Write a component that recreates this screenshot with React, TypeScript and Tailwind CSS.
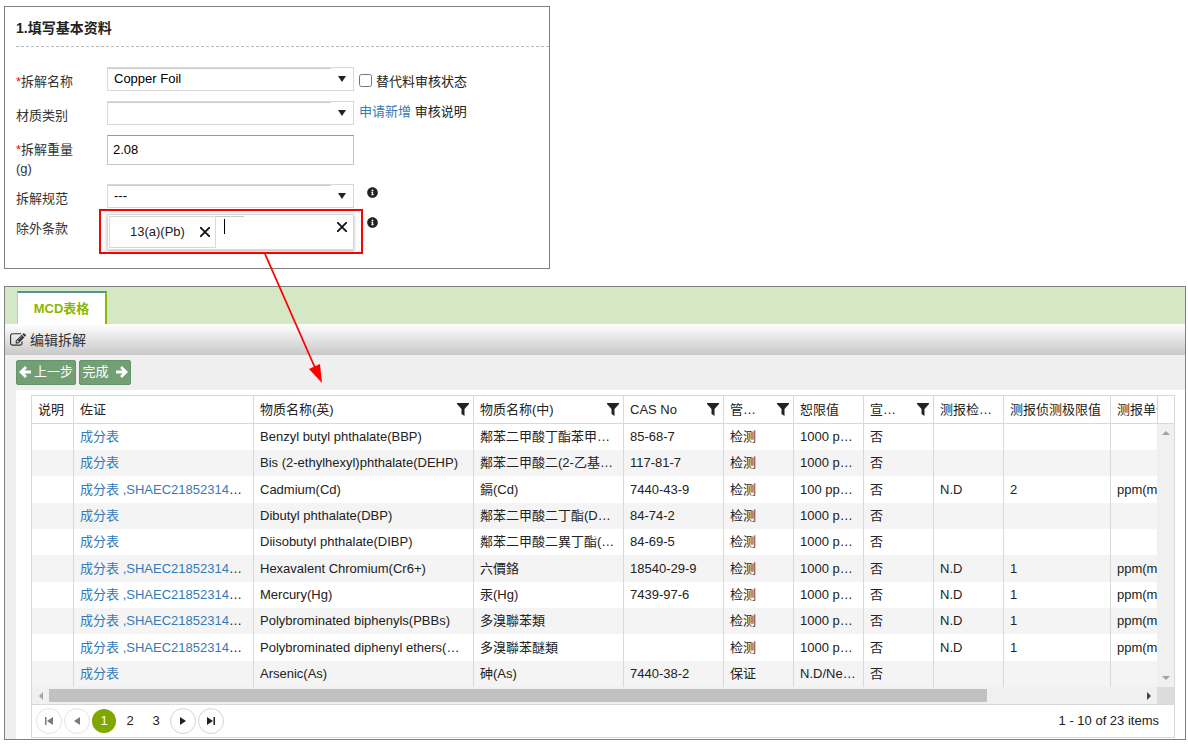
import { useState } from 'react'
import type { ReactNode } from 'react'
import { FaInfoCircle } from 'react-icons/fa'

interface Column {
  title: string
  width: string
  filter?: boolean
}

const columns: Column[] = [
  { title: '说明', width: 'w-[41px]' },
  { title: '佐证', width: 'w-[180px]' },
  { title: '物质名称(英)', width: 'w-[220px]', filter: true },
  { title: '物质名称(中)', width: 'w-[150px]', filter: true },
  { title: 'CAS No', width: 'w-[100px]', filter: true },
  { title: '管制类型', width: 'w-[70px]', filter: true },
  { title: '恕限值', width: 'w-[70px]' },
  { title: '宣告排除', width: 'w-[70px]', filter: true },
  { title: '测报检测值', width: 'w-[70px]' },
  { title: '测报侦测极限值', width: 'w-[107px]' },
  { title: '测报单位', width: 'w-[100px]' },
]

const REPORT = 'SHAEC2185231401'

// evidence report, english, chinese, CAS, control, threshold, declared, result, limit, unit
const rows = [
  ['', 'Benzyl butyl phthalate(BBP)', '鄰苯二甲酸丁酯苯甲酯(BBP)', '85-68-7', '检测', '1000 ppm', '否', '', '', ''],
  ['', 'Bis (2-ethylhexyl)phthalate(DEHP)', '鄰苯二甲酸二(2-乙基己基)酯', '117-81-7', '检测', '1000 ppm', '否', '', '', ''],
  [REPORT, 'Cadmium(Cd)', '鎘(Cd)', '7440-43-9', '检测', '100 ppm(mg/kg)', '否', 'N.D', '2', 'ppm(mg/kg)'],
  ['', 'Dibutyl phthalate(DBP)', '鄰苯二甲酸二丁酯(DBP)', '84-74-2', '检测', '1000 ppm', '否', '', '', ''],
  ['', 'Diisobutyl phthalate(DIBP)', '鄰苯二甲酸二異丁酯(DIBP)', '84-69-5', '检测', '1000 ppm', '否', '', '', ''],
  [REPORT, 'Hexavalent Chromium(Cr6+)', '六價鉻', '18540-29-9', '检测', '1000 ppm', '否', 'N.D', '1', 'ppm(mg/kg)'],
  [REPORT, 'Mercury(Hg)', '汞(Hg)', '7439-97-6', '检测', '1000 ppm', '否', 'N.D', '1', 'ppm(mg/kg)'],
  [REPORT, 'Polybrominated biphenyls(PBBs)', '多溴聯苯類', '', '检测', '1000 ppm', '否', 'N.D', '1', 'ppm(mg/kg)'],
  [REPORT, 'Polybrominated diphenyl ethers(PBDEs)', '多溴聯苯醚類', '', '检测', '1000 ppm', '否', 'N.D', '1', 'ppm(mg/kg)'],
  ['', 'Arsenic(As)', '砷(As)', '7440-38-2', '保证', 'N.D/Negative', '否', '', '', ''],
]

const FilterIcon = () => (
  <svg viewBox="0 0 12 13" className="w-3 h-[13px]" fill="#222">
    <path d="M0 0h12v1L7.500 6v7L4.500 11V6L0 1z" />
  </svg>
)

const EditIcon = () => (
  <svg viewBox="0 0 1792 1792" className="w-4 h-4" fill="currentColor">
    <path d="M888 1184l116-116-152-152-116 116v56h96v96h56zm440-720q-16-16-33 1l-350 350q-17 17-1 33t33-1l350-350q17-17 1-33zm80 594v190q0 119-84.500 203.500t-203.500 84.500h-832q-119 0-203.500-84.500t-84.500-203.500v-832q0-119 84.500-203.500t203.500-84.500h832q63 0 117 25 15 7 18 23 3 17-9 29l-49 49q-14 14-32 8-23-6-45-6h-832q-66 0-113 47t-47 113v832q0 66 47 113t113 47h832q66 0 113-47t47-113v-126q0-13 9-22l64-64q15-15 35-7t20 29zm-96-738l288 288-672 672h-288v-288zm444 132l-92 92-288-288 92-92q28-28 68-28t68 28l152 152q28 28 28 68t-28 68z" />
  </svg>
)

const StepArrow = ({ path }: { path: string }) => (
  <svg viewBox="0 0 12 12" className="w-3 h-3" fill="none" stroke="#fff" strokeWidth="2.8">
    <path d={path} />
  </svg>
)

const Cross = () => (
  <svg viewBox="0 0 10 10" className="w-2.5 h-2.5" stroke="#111" strokeWidth="1.8" fill="none">
    <path d="M0 0l10 10M10 0l-10 10" />
  </svg>
)

const Field = ({ id, label, required, children }: { id: string; label: ReactNode; required?: boolean; children: ReactNode }) => (
  <div className="flex items-start">
    <label htmlFor={id} className="w-[91px] shrink-0 pt-[5px] pr-6 leading-[19px] text-[#333]">
      {required && <span className="text-[#f00]">*</span>}
      {label}
    </label>
    {children}
  </div>
)

const DropDown = ({ id, options }: { id: string; options: string[] }) => (
  <div className="flex w-[247px] h-6 border border-[#d9d9d9] bg-white">
    <select id={id} className="flex-1 min-w-0 appearance-none border-t border-[#ccc] pl-1.5 pb-1 bg-white text-black outline-none">
      {options.map((o) => (
        <option key={o}>{o}</option>
      ))}
    </select>
    <span className="flex w-[22px] items-center justify-center">
      <svg viewBox="0 0 8 6" className="w-2 h-1.5" fill="#222">
        <path d="M0 0h8L4 6z" />
      </svg>
    </span>
  </div>
)

const BasicForm = () => {
  const [weight, setWeight] = useState('2.08')
  const [text, setText] = useState('')

  return (
    <section className="w-[546px] max-w-full border border-[#808080] pl-[11px] pb-[18px]">
      <h2 className="h-10 pt-3 border-b border-dashed border-[#bbb] text-sm leading-[19px] font-bold text-[#222]">
        1.填写基本资料
      </h2>
      <form className="pt-5">
        <div className="flex h-[68px]">
          <div className="flex flex-col gap-2.5">
            <Field id="name" label="拆解名称" required>
              <DropDown id="name" options={['Copper Foil']} />
            </Field>
            <Field id="material" label="材质类别">
              <DropDown id="material" options={['']} />
            </Field>
          </div>
          <div className="flex flex-col pt-1.5 pl-[5px]">
            <label className="flex items-center gap-1 h-[18px] text-[#222]">
              <input type="checkbox" className="w-[13px] h-[13px] -mt-1" />
              替代料审核状态
            </label>
            <div className="mt-3 leading-[18px] text-[#222]">
              <a href="#apply" className="text-[#337ab7]">申请新增</a> 审核说明
            </div>
          </div>
        </div>
        <div className="h-[49px]">
          <Field id="weight" label={<>拆解重量<br />(g)</>} required>
            <input
              id="weight"
              type="text"
              value={weight}
              onChange={(e) => setWeight(e.target.value)}
              className="w-[247px] h-[30px] border border-[#c4c4c4] border-t-[#999] px-[5px] pb-0.5 text-black outline-none"
            />
          </Field>
        </div>
        <div className="h-[30px]">
          <Field id="spec" label="拆解规范">
            <DropDown id="spec" options={['---']} />
            <FaInfoCircle className="ml-[13px] mt-[3px] w-[11px] h-[11px] text-[#222]" />
          </Field>
        </div>
        <Field id="exempt" label="除外条款">
          <div className="relative flex w-[247px] h-9 p-px border border-[#d9d9d9] bg-white shadow-[0_1px_3px_rgba(0,0,0,0.3)]">
            <div className="flex w-[107px] items-center border border-[#d9d9d9] pl-5 gap-[15px] text-[#222]">
              13(a)(Pb)
              <button type="button" aria-label="移除">
                <Cross />
              </button>
            </div>
            <input
              id="exempt"
              type="text"
              value={text}
              onChange={(e) => setText(e.target.value)}
              className="w-7 h-6 border-t border-[#ccc] outline-none"
            />
            <button type="button" aria-label="清除" className="ml-auto mr-[5px] self-start mt-1.5">
              <Cross />
            </button>
            <span className="absolute left-[116px] top-1 w-px h-[15px] bg-black" />
            {/* highlight frame */}
            <span className="absolute -left-[9px] -right-[10px] -top-1.5 -bottom-[5px] border-2 border-[#f00]" />
          </div>
          <FaInfoCircle className="ml-[13px] mt-[3px] w-[11px] h-[11px] text-[#222]" />
        </Field>
      </form>
    </section>
  )
}

const Grid = () => (
  <div className="border border-[#d9d9d9] bg-white">
    <div className="flex">
      <div className="flex-1 min-w-0 overflow-hidden">
        <table className="table-fixed w-[1178px] border-separate border-spacing-0 text-left text-[#222]">
          <thead>
            <tr className="h-7">
              {columns.map((c, i) => (
                <th key={c.title} className={`${c.width} p-0 border-b border-[#d9d9d9] font-normal ${i > 0 ? 'border-l' : ''}`}>
                  <div className="flex items-center pl-1.5 pr-1">
                    <span className={`flex-1 truncate leading-5 ${c.filter ? 'pr-[17px]' : ''}`}>{c.title}</span>
                    {c.filter && (
                      <button type="button" aria-label="筛选">
                        <FilterIcon />
                      </button>
                    )}
                  </div>
                </th>
              ))}
            </tr>
          </thead>
          <tbody>
            {rows.map(([report, ...cells], i) => (
              <tr key={cells[0]} className={`${i % 3 === 2 ? 'h-[27px]' : 'h-[26px]'} ${i % 2 ? 'bg-[#f4f4f4]' : 'bg-white'}`}>
                <td className="p-0" />
                <td className="py-0 pl-1.5 pr-2.5 border-l border-[#d9d9d9] truncate leading-5">
                  <a href="#evidence" className="text-[#337ab7]">成分表</a>
                  {report && <a href="#report" className="text-[#337ab7]"> ,{report}</a>}
                </td>
                {cells.map((cell, j) => (
                  <td key={j} className="py-0 pl-1.5 pr-[7px] border-l border-[#d9d9d9] truncate leading-5">
                    {cell}
                  </td>
                ))}
              </tr>
            ))}
          </tbody>
        </table>
      </div>
      <div className="flex flex-col w-[17px] shrink-0">
        <div className="h-7 border-b border-l border-[#d9d9d9]" />
        <div className="flex flex-1 flex-col items-center justify-between bg-[#f0f0f0] pt-[7px] pb-[7px]">
          <svg viewBox="0 0 8 4" className="w-2 h-1" fill="#a3a3a3"><path d="M4 0l4 4H0z" /></svg>
          <svg viewBox="0 0 8 4" className="w-2 h-1" fill="#a3a3a3"><path d="M0 0h8L4 4z" /></svg>
        </div>
      </div>
    </div>
    <div className="flex h-[17px] items-center bg-[#f0f0f0]">
      <span className="flex w-[17px] justify-center">
        <svg viewBox="0 0 4 8" className="w-1 h-2" fill="#a3a3a3"><path d="M4 0v8L0 4z" /></svg>
      </span>
      <div className="flex-1 h-[13px]">
        <div className="w-[86%] h-full bg-[#c1c1c1]" />
      </div>
      <span className="flex w-[17px] justify-center">
        <svg viewBox="0 0 4 8" className="w-1 h-2" fill="#444"><path d="M0 0l4 4-4 4z" /></svg>
      </span>
      <span className="w-[17px] h-full bg-[#dcdcdc]" />
    </div>
    <Pager />
  </div>
)

const PageArrow = ({ label, path, disabled }: { label: string; path: string; disabled?: boolean }) => (
  <button
    type="button"
    aria-label={label}
    disabled={disabled}
    className={`flex w-[26px] h-[26px] items-center justify-center rounded-full border border-[#d4d4d4] ${disabled ? 'opacity-60' : ''}`}
  >
    <svg viewBox="0 0 8 8" className="w-2 h-2" fill="#222"><path d={path} /></svg>
  </button>
)

const Pager = () => {
  const [page, setPage] = useState(1)

  return (
    <div className="flex h-[33px] items-center border-t border-[#d9d9d9] pl-1 pr-[15px] text-[#222]">
      <div className="flex items-center gap-0.5">
        <PageArrow label="首页" path="M0 0h1.500v8H0zM8 0v8L2 4z" disabled={page === 1} />
        <PageArrow label="上一页" path="M7 0v8L1 4z" disabled={page === 1} />
        {[1, 2, 3].map((n) => (
          <button
            key={n}
            type="button"
            onClick={() => setPage(n)}
            className={`w-6 h-6 rounded-full ${n === page ? 'bg-[#7ea700] text-white' : ''}`}
          >
            {n}
          </button>
        ))}
        <PageArrow label="下一页" path="M1 0v8l6-4z" disabled={page === 3} />
        <PageArrow label="末页" path="M0 0v8l6-4zM6.500 0H8v8H6.500z" disabled={page === 3} />
      </div>
      <span className="ml-auto">1 - 10 of 23 items</span>
    </div>
  )
}

export default function App() {
  return (
    <main className="relative pt-1.5 pl-1 pr-0.5 bg-white text-[13px] font-['Liberation_Sans','Noto_Sans_CJK_SC',sans-serif]">
      <BasicForm />

      <section className="mt-[17px] border border-[#808080] bg-[#efefef]">
        <div className="h-[37px] pt-1 pl-3 bg-[#d5e8c6]">
          <button
            type="button"
            className="block w-[90px] h-[34px] border-t-2 border-r-2 border-l border-t-[#5a8f9c] border-r-[#8db600] border-l-[#c4c4c4] bg-white font-bold text-[#8db600]"
          >
            MCD表格
          </button>
        </div>
        <div className="flex h-[31px] items-center gap-1 pl-[5px] bg-linear-to-b from-white to-[#c8c8c8] text-sm text-[#333]">
          <EditIcon />
          编辑拆解
        </div>
        <div className="flex h-[35px] gap-[3px] pt-[5px] pl-[11px]">
          <button type="button" className="flex w-[60px] h-[25px] items-center justify-center gap-[3px] border border-[#63946a] rounded-xs bg-[#739f75] pb-0.5 text-white">
            <StepArrow path="M7 1L2 6l5 5M2 6h10" />
            上一步
          </button>
          <button type="button" className="flex w-[52px] h-[25px] items-center justify-center gap-[7px] border border-[#63946a] rounded-xs bg-[#739f75] pb-0.5 text-white">
            完成
            <StepArrow path="M5 1l5 5-5 5M10 6H0" />
          </button>
        </div>
        <div className="ml-[11px] pt-[5px] pl-[15px] pr-2.5 pb-px bg-white">
          <Grid />
        </div>
      </section>

      {/* pointer from the exemption field to the grid */}
      <svg viewBox="0 0 62 134" className="absolute left-[263px] top-[252px] w-[62px] h-[134px] pointer-events-none">
        <path d="M2 2L53 118" stroke="#f00" strokeWidth="1.8" />
        <path d="M59 131L46 117L57 112z" fill="#f00" />
      </svg>
    </main>
  )
}
